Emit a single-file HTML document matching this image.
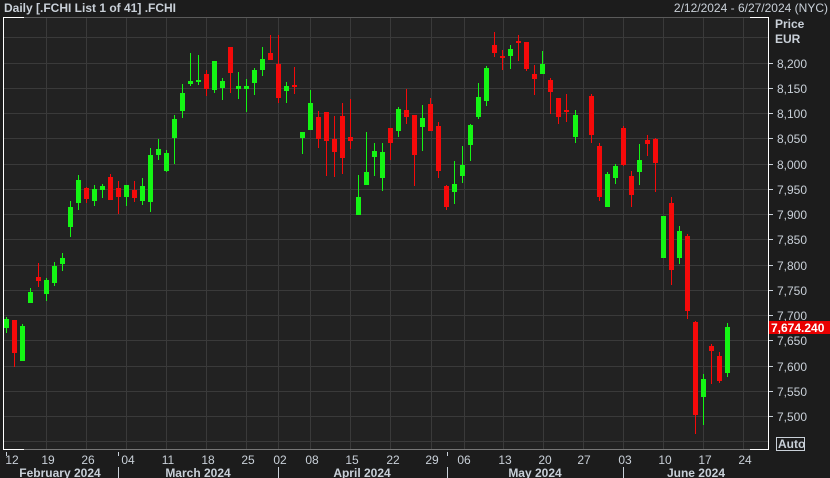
<!DOCTYPE html>
<html><head><meta charset="utf-8"><style>
html,body{margin:0;padding:0;background:#1c1c1c;width:830px;height:478px;overflow:hidden}
text{font-family:"Liberation Sans",sans-serif;fill:#c9d0d8}
</style></head><body>
<svg width="830" height="478" viewBox="0 0 830 478" xmlns="http://www.w3.org/2000/svg">
<rect x="0" y="0" width="830" height="478" fill="#1c1c1c"/>
<rect x="3" y="17" width="765" height="432" fill="#222222"/>
<g stroke="#3a3a3a" stroke-width="1">
<line x1="3" y1="37.5" x2="768" y2="37.5"/><line x1="3" y1="63.5" x2="768" y2="63.5"/><line x1="3" y1="88.5" x2="768" y2="88.5"/><line x1="3" y1="113.5" x2="768" y2="113.5"/><line x1="3" y1="138.5" x2="768" y2="138.5"/><line x1="3" y1="164.5" x2="768" y2="164.5"/><line x1="3" y1="189.5" x2="768" y2="189.5"/><line x1="3" y1="214.5" x2="768" y2="214.5"/><line x1="3" y1="239.5" x2="768" y2="239.5"/><line x1="3" y1="265.5" x2="768" y2="265.5"/><line x1="3" y1="290.5" x2="768" y2="290.5"/><line x1="3" y1="315.5" x2="768" y2="315.5"/><line x1="3" y1="340.5" x2="768" y2="340.5"/><line x1="3" y1="366.5" x2="768" y2="366.5"/><line x1="3" y1="391.5" x2="768" y2="391.5"/><line x1="3" y1="416.5" x2="768" y2="416.5"/><line x1="3" y1="441.5" x2="768" y2="441.5"/>
<line x1="46.5" y1="17" x2="46.5" y2="449"/><line x1="86.5" y1="17" x2="86.5" y2="449"/><line x1="126.5" y1="17" x2="126.5" y2="449"/><line x1="166.5" y1="17" x2="166.5" y2="449"/><line x1="206.5" y1="17" x2="206.5" y2="449"/><line x1="246.5" y1="17" x2="246.5" y2="449"/><line x1="278.5" y1="17" x2="278.5" y2="449"/><line x1="310.5" y1="17" x2="310.5" y2="449"/><line x1="350.5" y1="17" x2="350.5" y2="449"/><line x1="390.5" y1="17" x2="390.5" y2="449"/><line x1="431.5" y1="17" x2="431.5" y2="449"/><line x1="464.5" y1="17" x2="464.5" y2="449"/><line x1="503.5" y1="17" x2="503.5" y2="449"/><line x1="543.5" y1="17" x2="543.5" y2="449"/><line x1="583.5" y1="17" x2="583.5" y2="449"/><line x1="623.5" y1="17" x2="623.5" y2="449"/><line x1="663.5" y1="17" x2="663.5" y2="449"/><line x1="703.5" y1="17" x2="703.5" y2="449"/><line x1="743.5" y1="17" x2="743.5" y2="449"/>
</g>
<line x1="3" y1="17.5" x2="768" y2="17.5" stroke="#5a5a5a"/>
<line x1="3" y1="449.5" x2="768" y2="449.5" stroke="#777"/>
<line x1="3.5" y1="17" x2="3.5" y2="450" stroke="#ffffff"/>
<line x1="3" y1="17.5" x2="24" y2="17.5" stroke="#ffffff"/>
<line x1="3" y1="449.5" x2="24" y2="449.5" stroke="#ffffff"/>
<line x1="768.5" y1="17" x2="768.5" y2="450" stroke="#ffffff"/>
<line x1="750" y1="17.5" x2="768" y2="17.5" stroke="#ffffff"/>
<line x1="750" y1="449.5" x2="768" y2="449.5" stroke="#ffffff"/>
<g id="candles"></g>
<text x="775" y="28" font-size="12" font-weight="bold">Price</text>
<text x="775" y="43" font-size="12" font-weight="bold">EUR</text>
<g font-size="12">
<text x="777" y="68">8,200</text><text x="777" y="93">8,150</text><text x="777" y="118">8,100</text><text x="777" y="143">8,050</text><text x="777" y="169">8,000</text><text x="777" y="194">7,950</text><text x="777" y="219">7,900</text><text x="777" y="244">7,850</text><text x="777" y="270">7,800</text><text x="777" y="295">7,750</text><text x="777" y="320">7,700</text><text x="777" y="345">7,650</text><text x="777" y="371">7,600</text><text x="777" y="396">7,550</text><text x="777" y="421">7,500</text>
</g>
<g stroke="#c9d0d8"><line x1="769" y1="63.5" x2="773" y2="63.5"/><line x1="769" y1="88.5" x2="773" y2="88.5"/><line x1="769" y1="113.5" x2="773" y2="113.5"/><line x1="769" y1="138.5" x2="773" y2="138.5"/><line x1="769" y1="164.5" x2="773" y2="164.5"/><line x1="769" y1="189.5" x2="773" y2="189.5"/><line x1="769" y1="214.5" x2="773" y2="214.5"/><line x1="769" y1="239.5" x2="773" y2="239.5"/><line x1="769" y1="265.5" x2="773" y2="265.5"/><line x1="769" y1="290.5" x2="773" y2="290.5"/><line x1="769" y1="315.5" x2="773" y2="315.5"/><line x1="769" y1="340.5" x2="773" y2="340.5"/><line x1="769" y1="366.5" x2="773" y2="366.5"/><line x1="769" y1="391.5" x2="773" y2="391.5"/><line x1="769" y1="416.5" x2="773" y2="416.5"/></g>
<rect x="769" y="321" width="61" height="13" fill="#e80000"/>
<text x="771" y="332" font-size="12" font-weight="bold" style="fill:#ffffff">7,674.240</text>
<rect x="776.5" y="437.5" width="28" height="13" fill="none" stroke="#c9d0d8"/>
<text x="778" y="448" font-size="12" font-weight="bold">Auto</text>
<text x="4" y="12" font-size="12" font-weight="bold">Daily [.FCHI List 1 of 41] .FCHI</text>
<text x="828" y="12" font-size="12" text-anchor="end">2/12/2024 - 6/27/2024 (NYC)</text>
<g stroke="#c9d0d8"><line x1="6.5" y1="452" x2="6.5" y2="456"/><line x1="118.5" y1="452" x2="118.5" y2="456"/><line x1="447.5" y1="452" x2="447.5" y2="456"/>
<line x1="118.5" y1="467" x2="118.5" y2="478"/><line x1="278.5" y1="467" x2="278.5" y2="478"/><line x1="447.5" y1="467" x2="447.5" y2="478"/><line x1="623.5" y1="467" x2="623.5" y2="478"/></g>
<g font-size="12" text-anchor="middle">
<text x="12" y="464">12</text><text x="48" y="464">19</text><text x="88" y="464">26</text><text x="128" y="464">04</text><text x="168" y="464">11</text><text x="208" y="464">18</text><text x="248" y="464">25</text><text x="280" y="464">02</text><text x="312" y="464">08</text><text x="352" y="464">15</text><text x="393" y="464">22</text><text x="432" y="464">29</text><text x="464" y="464">06</text><text x="505" y="464">13</text><text x="545" y="464">20</text><text x="584" y="464">27</text><text x="625" y="464">03</text><text x="665" y="464">10</text><text x="705" y="464">17</text><text x="745" y="464">24</text>
</g>
<g font-size="12" font-weight="bold" text-anchor="middle">
<text x="60" y="477">February 2024</text><text x="198" y="477">March 2024</text><text x="362" y="477">April 2024</text><text x="535" y="477">May 2024</text><text x="696" y="477">June 2024</text>
</g>
</svg>
<script>
var d=[
[6,319,328,317,333,1],[14,320,353,320,367,0],[22,326,361,324,361,1],[30,292,303,288,303,1],[38,277,281,263,287,0],[46,280,294,278,301,1],[54,266,283,262,286,1],[62,258,264,253,271,1],[70,207,227,201,237,1],[78,180,203,175,210,1],[86,188,199,187,203,0],[94,189,201,185,206,1],[102,186,190,184,198,1],[110,177,200,174,200,0],[118,188,197,181,214,0],[126,185,197,185,206,1],[134,190,198,181,202,0],[142,186,201,178,205,1],[150,155,202,148,212,1],[158,149,155,139,160,1],[166,153,171,150,172,1],[174,119,138,115,164,1],[182,93,111,84,118,1],[190,81,84,53,86,1],[198,80,82,55,85,1],[206,74,89,70,96,0],[214,61,90,61,93,1],[222,81,88,78,100,1],[230,47,73,47,93,0],[238,86,89,72,99,1],[246,86,89,79,112,1],[254,70,83,68,95,1],[262,59,70,47,76,1],[270,53,60,35,60,0],[278,64,98,35,103,0],[286,86,91,82,103,1],[294,85,87,67,94,0],[302,132,138,132,154,1],[310,103,130,90,130,1],[318,117,139,111,148,0],[326,112,141,112,176,0],[334,139,152,116,177,0],[342,116,158,103,174,0],[350,137,141,99,149,0],[358,197,215,175,215,1],[366,172,185,132,185,1],[374,151,157,143,176,1],[382,152,178,143,191,1],[390,128,143,128,160,0],[398,109,131,107,137,1],[406,110,117,89,124,0],[414,115,155,115,186,0],[422,118,127,105,151,1],[430,104,131,98,131,0],[438,126,171,122,178,0],[446,186,207,185,210,0],[454,184,192,161,204,1],[462,165,176,146,183,1],[470,125,145,124,161,1],[478,97,117,83,119,1],[486,68,101,66,106,1],[494,45,53,32,57,0],[502,56,57,50,70,0],[510,49,56,45,69,1],[518,41,43,35,61,0],[526,42,69,42,71,0],[534,74,79,65,95,0],[542,64,74,51,74,1],[550,80,92,78,114,0],[558,98,117,98,124,0],[566,110,112,94,122,0],[575,115,137,110,143,1],[591,96,135,94,143,0],[599,146,197,143,201,0],[607,174,207,172,207,1],[615,166,178,164,184,1],[623,128,165,126,166,0],[631,176,195,171,207,0],[639,160,172,144,185,1],[647,140,144,135,156,0],[655,139,163,138,192,0],[663,216,258,216,258,1],[671,203,270,197,285,0],[679,231,258,226,264,1],[687,236,311,234,319,0],[695,322,415,321,434,0],[703,379,397,374,425,1],[711,346,351,344,384,0],[719,356,381,352,383,0],[727,327,373,323,377,1]];
var s='';
d.forEach(function(c){var col=c[5]?'#14f514':'#f50a0a';
s+='<rect x="'+c[0]+'" y="'+c[3]+'" width="1" height="'+(c[4]-c[3])+'" fill="'+col+'"/>';
s+='<rect x="'+(c[0]-2)+'" y="'+c[1]+'" width="5" height="'+Math.max(2,c[2]-c[1])+'" fill="'+col+'"/>';});
document.getElementById('candles').innerHTML=s;
</script>
</body></html>
